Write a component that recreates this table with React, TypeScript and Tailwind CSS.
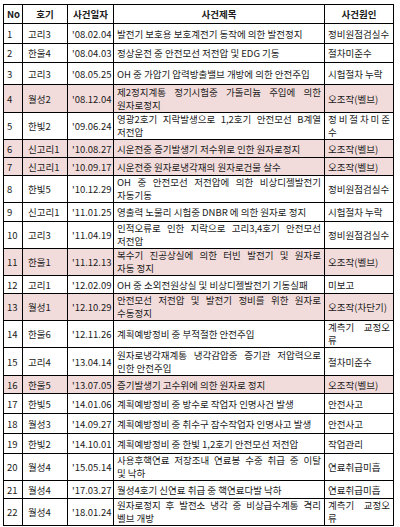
import React from 'react';

interface Incident {
    no: number;
    unit: string;
    date: string;
    title: string[];
    cause: string[];
    causeChars?: boolean;
    pink?: boolean;
    h: string;
}

const rows: Incident[] = [
    { no: 1, unit: '고리3', date: "'08.02.04", title: ['발전기 보호용 보호계전기 동작에 의한 발전정지'], cause: ['정비원점검실수'], h: 'h-[20px]' },
    { no: 2, unit: '한울4', date: "'08.04.03", title: ['정상운전 중 안전모선 저전압 및 EDG 기동'], cause: ['절차미준수'], h: 'h-[19px]' },
    { no: 3, unit: '고리3', date: "'08.05.25", title: ['OH 중 가압기 압력방출밸브 개방에 의한 안전주입'], cause: ['시험절차 누락'], h: 'h-[22px]' },
    { no: 4, unit: '월성2', date: "'08.12.04", title: ['제2정지계통 정기시험중 가돌리늄 주입에 의한', '원자로정지'], cause: ['오조작(벨브)'], pink: true, h: 'h-[28px]' },
    { no: 5, unit: '한빛2', date: "'09.06.24", title: ['영광2호기 지락발생으로 1,2호기 안전모선 B계열', '저전압'], cause: ['정비절차미준', '수'], causeChars: true, h: 'h-[27px]' },
    { no: 6, unit: '신고리1', date: "'10.08.27", title: ['시운전중 증기발생기 저수위로 인한 원자로정지'], cause: ['오조작(벨브)'], pink: true, h: 'h-[18px]' },
    { no: 7, unit: '신고리1', date: "'10.09.17", title: ['시운전중 원자로냉각재의 원자로건물 살수'], cause: ['오조작(벨브)'], pink: true, h: 'h-[18px]' },
    { no: 8, unit: '한빛5', date: "'10.12.29", title: ['OH 중 안전모선 저전압에 의한 비상디젤발전기', '자동기동'], cause: ['정비원점검실수'], h: 'h-[27px]' },
    { no: 9, unit: '신고리1', date: "'11.01.25", title: ['영출력 노물리 시험중 DNBR 에 의한 원자로 정지'], cause: ['시험절차 누락'], h: 'h-[19px]' },
    { no: 10, unit: '고리3', date: "'11.04.19", title: ['인적오류로 인한 지락으로 고리3,4호기 안전모선', '저전압'], cause: ['정비원점검실수'], h: 'h-[26px]' },
    { no: 11, unit: '한울1', date: "'11.12.13", title: ['복수기 진공상실에 의한 터빈 발전기 및 원자로', '자동 정지'], cause: ['오조작(벨브)'], pink: true, h: 'h-[26px]' },
    { no: 12, unit: '고리1', date: "'12.02.09", title: ['OH 중 소외전원상실 및 비상디젤발전기 기동실패'], cause: ['미보고'], h: 'h-[18px]' },
    { no: 13, unit: '월성1', date: "'12.10.29", title: ['안전모선 저전압 및 발전기 정비를 위한 원자로', '수동정지'], cause: ['오조작(차단기)'], pink: true, h: 'h-[27px]' },
    { no: 14, unit: '한울6', date: "'12.11.26", title: ['계획예방정비 중 부적절한 안전주입'], cause: ['계측기 교정오', '류'], h: 'h-[26px]' },
    { no: 15, unit: '고리4', date: "'13.04.14", title: ['원자로냉각재계통 냉각감압중 증기관 저압력으로', '인한 안전주입'], cause: ['절차미준수'], h: 'h-[28px]' },
    { no: 16, unit: '한울5', date: "'13.07.05", title: ['증기발생기 고수위에 의한 원자로 정지'], cause: ['오조작(벨브)'], pink: true, h: 'h-[18px]' },
    { no: 17, unit: '한빛5', date: "'14.01.06", title: ['계획예방정비 중 방수로 작업자 인명사건 발생'], cause: ['안전사고'], h: 'h-[20px]' },
    { no: 18, unit: '월성3', date: "'14.09.27", title: ['계획예방정비 중 취수구 잠수작업자 인명사고 발생'], cause: ['안전사고'], h: 'h-[20px]' },
    { no: 19, unit: '한빛2', date: "'14.10.01", title: ['계획예방정비 중 한빛 1,2호기 안전모선 저전압'], cause: ['작업관리'], h: 'h-[20px]' },
    { no: 20, unit: '월성4', date: "'15.05.14", title: ['사용후핵연료 저장조내 연료봉 수중 취급 중 이탈', '및 낙하'], cause: ['연료취급미흡'], h: 'h-[26px]' },
    { no: 21, unit: '월성4', date: "'17.03.27", title: ['월성4호기 신연료 취급 중 핵연료다발 낙하'], cause: ['연료취급미흡'], h: 'h-[18px]' },
    { no: 22, unit: '월성4', date: "'18.01.24", title: ['원자로정지 후 발전소 냉각 중 비상급수계통 격리', '벨브 개방'], cause: ['계측기 교정오', '류'], h: 'h-[27px]' },
];

// first line of a wrapped cell is stretched to the full width, like Excel's justify
function Lines({ lines, chars }: { lines: string[]; chars?: boolean }) {
    if (lines.length === 1) return <div className="whitespace-nowrap">{lines[0]}</div>;
    const parts = chars ? lines[0].split('') : lines[0].split(' ');
    return (
        <div className="leading-[13px]">
            <div className="flex justify-between whitespace-nowrap">
                {parts.map((p, i) => <span key={i}>{p}</span>)}
            </div>
            <div className="whitespace-nowrap">{lines[1]}</div>
        </div>
    );
}

export default function App() {
    const cell = 'border border-black px-[3px] py-0 align-middle';

    return (
        <div className="w-[400px] h-[527px] bg-white pt-[4px] pl-[3px] text-[9.5px] text-[#1a1a1a] font-['Noto_Sans_CJK_KR','Noto_Sans',sans-serif] leading-[12px]">
            <table className="table-fixed border-collapse w-[390px]">
                <colgroup>
                    <col className="w-[19px]" />
                    <col className="w-[45px]" />
                    <col className="w-[46px]" />
                    <col className="w-[211px]" />
                    <col className="w-[69px]" />
                </colgroup>
                <thead>
                    <tr className="h-[19px] font-bold">
                        <th className={cell + ' text-left px-[2px]'}>No</th>
                        <th className={cell + ' text-center'}>호기</th>
                        <th className={cell + ' text-center'}>사건일자</th>
                        <th className={cell + ' text-center'}>사건제목</th>
                        <th className={cell + ' text-center'}>사건원인</th>
                    </tr>
                </thead>
                <tbody>
                    {rows.map((r) => (
                        <tr key={r.no} className={r.h + (r.pink ? ' bg-[#f2dcdb]' : '')}>
                            <td className={cell + ' px-[2px]'}>{r.no}</td>
                            <td className={cell + ' pl-[5px]'}>{r.unit}</td>
                            <td className={cell + ' pl-[4px]'}>{r.date}</td>
                            <td className={cell}>
                                <Lines lines={r.title} />
                            </td>
                            <td className={cell}>
                                <Lines lines={r.cause} chars={r.causeChars} />
                            </td>
                        </tr>
                    ))}
                </tbody>
            </table>
        </div>
    );
}
